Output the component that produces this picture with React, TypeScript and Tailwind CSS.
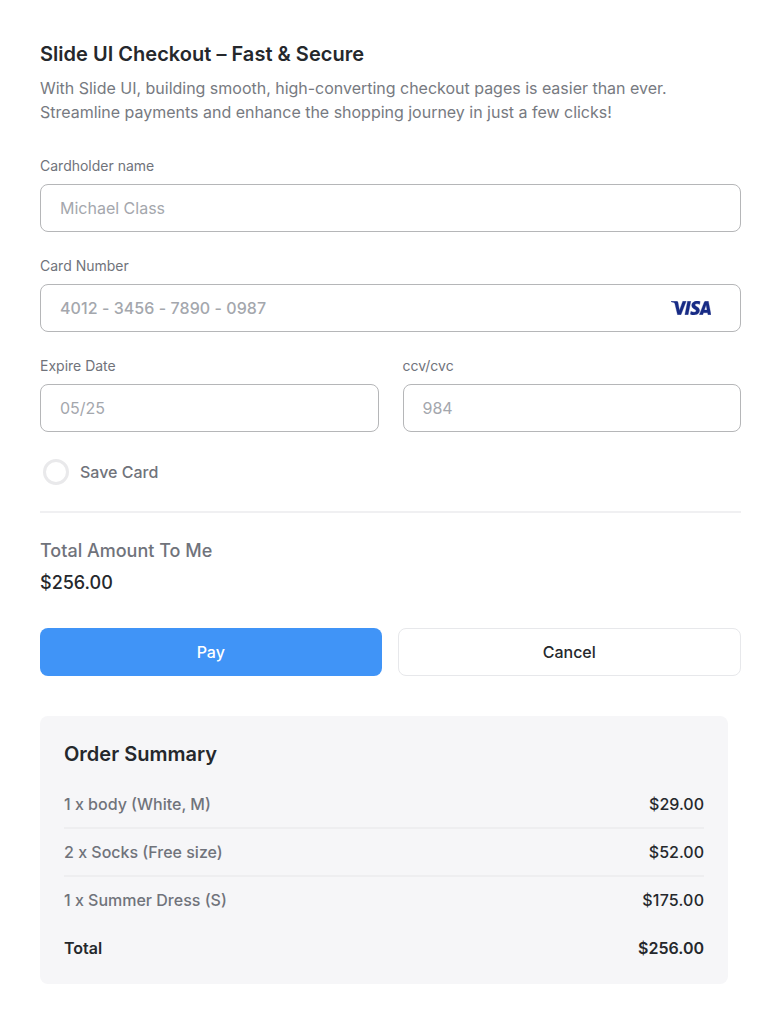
import React from "react";

const items = [
  { name: "1 x body (White, M)", price: "$29.00", spacing: "" },
  { name: "2 x Socks (Free size)", price: "$52.00", spacing: "" },
  { name: "1 x Summer Dress (S)", price: "$175.00", spacing: "tracking-[0.2px] -mr-[0.2px]" },
];

function Field({ label, value }: { label: string; value: string }) {
  const isCard = label === "Card Number";
  return (
    <label className="flex flex-1 flex-col">
      <span className="h-5 text-sm leading-5 text-[#70737b]">{label}</span>
      <span className="mt-2 flex h-12 items-center rounded-lg border border-[#b5b6b8] pl-[19px] pr-[29px]">
        <input
          className={`min-w-0 flex-1 bg-transparent text-base leading-6 outline-none placeholder:text-[#a4a7ad] ${isCard ? "font-medium tracking-[0.06px]" : ""}`}
          placeholder={value}
        />
        {isCard && <Visa />}
      </span>
    </label>
  );
}

function Visa() {
  return (
    <svg width="40" height="14" viewBox="0 0 1000 324.684" preserveAspectRatio="none" fill="#172b85" stroke="#172b85" strokeWidth="8">
      <path d="M651.185.5c-70.933 0-134.322 36.766-134.322 104.694 0 77.9 112.423 83.28 112.423 122.415 0 16.478-18.884 31.229-51.137 31.229-45.773 0-79.984-20.611-79.984-20.611l-14.638 68.547s39.41 17.41 91.734 17.41c77.552 0 138.576-38.572 138.576-107.66 0-82.316-112.89-87.537-112.89-123.86 0-12.91 15.501-27.053 47.662-27.053 36.286 0 65.892 14.99 65.892 14.99l14.326-66.204S696.614.5 651.185.5zM2.218 5.497.5 15.49s29.842 5.461 56.719 16.356c34.606 12.492 37.072 19.765 42.9 42.353l63.51 244.832h85.138L379.927 5.497h-84.942L210.707 218.67l-34.39-180.696c-3.154-20.68-19.13-32.477-38.685-32.477H2.218zm411.865 0L347.449 319.03h80.999l66.4-313.534h-80.765zm451.759 0c-19.532 0-29.88 10.457-37.474 28.73L709.699 319.03h84.942l16.434-47.468h103.483l9.994 47.468H999.5L934.115 5.497h-68.273zm11.047 84.707 25.178 117.653h-67.454z" />
    </svg>
  );
}

export default function App() {
  return (
    <main className="min-h-screen bg-white pl-10 pr-[27px] pt-10 font-['Inter',sans-serif] text-[#25282c]">
      <header>
        <h1 className="text-xl font-semibold leading-7 tracking-[0.02px]">Slide UI Checkout – Fast &amp; Secure</h1>
        <p className="mt-2 w-[660px] text-base leading-6 tracking-[-0.015px] text-[#777a81]">
          With Slide UI, building smooth, high-converting checkout pages is easier than ever. Streamline payments and enhance the shopping journey in just a few clicks!
        </p>
      </header>

      <form className="mt-8 flex flex-col gap-6">
        <Field label="Cardholder name" value="Michael Class" />
        <Field label="Card Number" value="4012 - 3456 - 7890 - 0987" />
        <div className="flex gap-6">
          <Field label="Expire Date" value="05/25" />
          <Field label="ccv/cvc" value="984" />
        </div>
        <label className="flex h-8 items-center gap-2 text-base font-medium leading-6 text-[#70737b]">
          <span className="flex size-8 items-center justify-center">
            <span className="size-[26px] rounded-full border-3 border-[#e9e9eb]" />
          </span>
          Save Card
        </label>
      </form>

      <section className="mt-[23px] border-t-2 border-[#f0f0f2] pt-6">
        <p className="text-lg font-medium leading-7 text-[#70737b]">Total Amount To Me</p>
        <p className="mt-1 text-lg font-medium leading-7">$256.00</p>
        <div className="mt-[31px] flex gap-4 text-base font-medium">
          <button className="h-12 flex-1 rounded-lg bg-[#4094f7] text-white">Pay</button>
          <button className="h-12 flex-1 rounded-lg border border-[#e7e8eb]">Cancel</button>
        </div>
      </section>

      <section className="mt-10 h-[268px] w-[688px] rounded-lg bg-[#f6f6f8] px-6 pt-6">
        <h2 className="text-xl font-semibold leading-7">Order Summary</h2>
        <ul className="mt-[13px] text-base font-medium leading-6">
          {items.map((item) => (
            <li key={item.name} className="flex h-12 items-center justify-between border-b-2 border-[#eeeef0] last:border-transparent">
              <span className="text-[#70737b]">{item.name}</span>
              <span className={item.spacing}>{item.price}</span>
            </li>
          ))}
        </ul>
        <p className="-mt-px flex h-12 items-center justify-between text-base font-semibold">
          <span>Total</span>
          <span>$256.00</span>
        </p>
      </section>
    </main>
  );
}
